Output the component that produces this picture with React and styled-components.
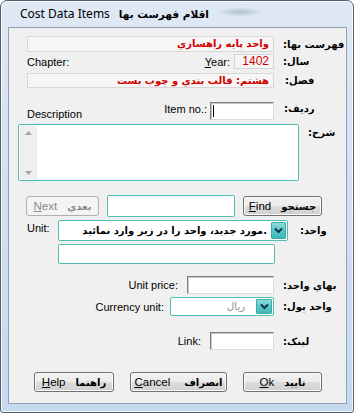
import React from "react";
import styled, { createGlobalStyle, css } from "styled-components";

const Global = createGlobalStyle`
  html, body { margin: 0; padding: 0; background: #ffffff; }
  body { font-family: "Liberation Sans", "DejaVu Sans", sans-serif; font-size: 11px; color: #000; }
  * { box-sizing: border-box; }
`;

const Window = styled.div`
  width: 354px;
  height: 413px;
  border: 1px solid #55606c;
  border-radius: 7px 7px 3px 3px;
  background: linear-gradient(180deg, #dfe9f5 0%, #d3e1f1 40%, #c6d9ee 100%);
  box-shadow: inset 0 0 0 1px rgba(255, 255, 255, 0.75);
  padding: 0 6px 8px 7px;
  display: flex;
  flex-direction: column;
`;

const TitleBar = styled.div`
  height: 26px;
  display: flex;
  align-items: center;
  gap: 9px;
  padding: 0 0 1px 12px;
  background: radial-gradient(ellipse 22px 5px at 232px 11px, rgba(90, 110, 130, 0.35), rgba(90, 110, 130, 0) 100%);
`;

const TitleText = styled.span`
  font-family: "Noto Sans", "DejaVu Sans", sans-serif;
  font-size: 12px;
  color: #000;
  ${(p) => p.$fa && css`font-family: "DejaVu Sans", sans-serif; font-weight: bold; font-size: 10.5px; direction: rtl;`}
`;

const Client = styled.div`
  flex: 1;
  background: #f0f0f0;
  border: 1px solid #8fa1b6;
  padding: 8px 0 0 18px;
  display: flex;
  flex-direction: column;
`;

const Row = styled.div`
  display: flex;
  align-items: ${(p) => p.$align || "center"};
  height: ${(p) => p.$h}px;
  margin-top: ${(p) => p.$mt || 0}px;
  margin-left: ${(p) => p.$ml || 0}px;
  gap: ${(p) => p.$gap || 0}px;
`;

const Field = styled.div`
  width: ${(p) => p.$w || 247}px;
  height: 100%;
  display: flex;
  align-items: ${(p) => p.$align || "center"};
  justify-content: ${(p) => p.$justify || "flex-end"};
  gap: ${(p) => p.$gap || 0}px;
`;

const FaLabel = styled.span`
  margin-left: ${(p) => (p.$ml === undefined ? 9 : p.$ml)}px;
  margin-top: ${(p) => p.$mt || 0}px;
  direction: rtl;
  font-family: "DejaVu Sans", sans-serif;
  font-weight: bold;
  font-size: 10px;
  white-space: nowrap;
  align-self: ${(p) => p.$self || "auto"};
  line-height: ${(p) => p.$lh || "normal"};
`;

const EnLabel = styled.span`
  font-family: "Liberation Sans", sans-serif;
  font-size: 11px;
  white-space: nowrap;
  margin-right: ${(p) => p.$mr || 0}px;
  margin-top: ${(p) => p.$mt || 0}px;
  align-self: ${(p) => p.$self || "auto"};
  line-height: ${(p) => p.$lh || "normal"};
`;

const U = styled.span`
  text-decoration: underline;
`;

const ReadBox = styled.div`
  width: ${(p) => p.$w}px;
  height: 100%;
  border: 1px solid #d6d6d6;
  background: #f6f6f6;
  color: #d40000;
  display: flex;
  align-items: center;
  justify-content: flex-end;
  padding: 0 4px 1px;
  overflow: hidden;
  white-space: nowrap;
  ${(p) =>
    p.$fa
      ? css`
          direction: rtl;
          justify-content: flex-start;
          font-family: "DejaVu Sans", sans-serif;
          font-weight: bold;
          font-size: 10px;
        `
      : css`
          font-family: "Liberation Sans", sans-serif;
          font-size: 12px;
        `}
`;

const SunkenInput = styled.div`
  width: ${(p) => p.$w}px;
  height: ${(p) => p.$h || 18}px;
  background: #fff;
  border: 1px solid;
  border-color: #7e7e7e #dcdcdc #dcdcdc #7e7e7e;
  box-shadow: inset 1px 1px 0 #c8c8c8;
  display: flex;
  align-items: center;
  padding-left: 2px;
`;

const Caret = styled.span`
  width: 1px;
  height: 12px;
  background: #000;
`;

const TealBox = styled.div`
  width: ${(p) => p.$w}px;
  height: ${(p) => p.$h}px;
  background: #fff;
  border: 1px solid #52bdb1;
  border-radius: 2px;
  display: flex;
  align-items: stretch;
`;

const Scroll = styled.div`
  width: 17px;
  margin: 1px 0 1px 1px;
  background: #efefef;
  display: flex;
  flex-direction: column;
  justify-content: space-between;
  align-items: center;
  padding: 5px 0 4px;
`;

const ComboText = styled.div`
  flex: 1;
  display: flex;
  align-items: center;
  justify-content: flex-end;
  padding-right: ${(p) => p.$pr || 3}px;
  white-space: nowrap;
  overflow: hidden;
  font-family: "DejaVu Sans", sans-serif;
  font-size: 10px;
  color: ${(p) => (p.$muted ? "#8a8a8a" : "#000")};
  font-weight: ${(p) => (p.$muted ? "normal" : "bold")};
`;

const DropBtn = styled.div`
  width: ${(p) => p.$w || 15}px;
  margin: 1px;
  border-radius: 1px;
  background: linear-gradient(180deg, #8fdcdc 0%, #5cc9c9 45%, #3fb7b9 100%);
  border: 1px solid #3aa9ab;
  display: flex;
  align-items: center;
  justify-content: center;
`;

const Button = styled.div`
  width: ${(p) => p.$w}px;
  height: 20px;
  border: 1px solid #707070;
  border-radius: 3px;
  background: linear-gradient(180deg, #f2f2f2 0%, #ebebeb 48%, #dddddd 52%, #cfcfcf 100%);
  box-shadow: inset 0 0 0 1px #fbfbfb;
  display: flex;
  align-items: center;
  justify-content: center;
  gap: ${(p) => p.$gap || 10}px;
  font-family: "Liberation Sans", sans-serif;
  font-size: 11.5px;
  color: #000;
  ${(p) =>
    p.$disabled &&
    css`
      border-color: #adb2b5;
      background: #f4f4f4;
      color: #8a8a8a;
      box-shadow: none;
    `}
`;

const BtnFa = styled.span`
  font-family: "DejaVu Sans", sans-serif;
  font-weight: bold;
  font-size: 10px;
  direction: rtl;
`;

const Chevron = () => (
  <svg width="9" height="7" viewBox="0 0 9 7">
    <path d="M1 1.5 L4.5 5 L8 1.5" fill="none" stroke="#13304f" strokeWidth="2" />
  </svg>
);

const Arrow = ({ down }) => (
  <svg width="7" height="4" viewBox="0 0 7 4">
    <path d={down ? "M0 0 L7 0 L3.5 4 Z" : "M0 4 L7 4 L3.5 0 Z"} fill="#a8a8a8" />
  </svg>
);

export default function App() {
  return (
    <>
      <Global />
      <Window>
        <TitleBar>
          <TitleText>Cost Data Items</TitleText>
          <TitleText $fa>اقلام فهرست بها</TitleText>
        </TitleBar>
        <Client>
          <Row $h={16}>
            <Field>
              <ReadBox $w={247} $fa>واحد پايه راهسازي</ReadBox>
            </Field>
            <FaLabel>فهرست بها:</FaLabel>
          </Row>

          <Row $h={15} $mt={2}>
            <Field $justify="space-between">
              <EnLabel>Chapter:</EnLabel>
              <Field $w={100} $gap={4}>
                <EnLabel>
                  <U>Y</U>ear:
                </EnLabel>
                <ReadBox $w={40}>1402</ReadBox>
              </Field>
            </Field>
            <FaLabel>سال:</FaLabel>
          </Row>

          <Row $h={15} $mt={4}>
            <Field>
              <ReadBox $w={247} $fa>هشتم: قالب بندي و چوب بست</ReadBox>
            </Field>
            <FaLabel $ml={11}>فصل:</FaLabel>
          </Row>

          <Row $h={21} $mt={12} $align="flex-start">
            <Field $justify="space-between" $align="flex-start">
              <EnLabel $self="flex-end" $lh="13px">Description</EnLabel>
              <Field $w={140} $gap={3}>
                <EnLabel $self="flex-start" $lh="18px">Item no.:</EnLabel>
                <SunkenInput $w={64}>
                  <Caret />
                </SunkenInput>
              </Field>
            </Field>
            <FaLabel $ml={10} $lh="18px">ردیف:</FaLabel>
          </Row>

          <Row $h={57} $mt={3} $ml={-9} $align="flex-start">
            <TealBox $w={281} $h={57}>
              <Scroll>
                <Arrow />
                <Arrow down />
              </Scroll>
            </TealBox>
            <FaLabel $mt={3}>شرح:</FaLabel>
          </Row>

          <Row $h={22} $mt={14} $ml={-1} $gap={8}>
            <Button $w={73} $disabled>
              <span>
                <U>N</U>ext
              </span>
              <BtnFa>بعدي</BtnFa>
            </Button>
            <TealBox $w={128} $h={22} />
            <Button $w={79}>
              <span>
                <U>F</U>ind
              </span>
              <BtnFa>جستجو</BtnFa>
            </Button>
          </Row>

          <Row $h={21} $mt={3} $align="flex-start">
            <Field $w={261} $justify="space-between" $align="flex-start">
              <EnLabel $mt={2}>Unit:</EnLabel>
              <TealBox $w={230} $h={21}>
                <ComboText>مورد جدید، واحد را در زیر وارد نمائید.</ComboText>
                <DropBtn>
                  <Chevron />
                </DropBtn>
              </TealBox>
            </Field>
            <FaLabel $ml={12} $lh="21px">واحد:</FaLabel>
          </Row>

          <Row $h={20} $mt={3} $ml={31}>
            <TealBox $w={217} $h={20} />
          </Row>

          <Row $h={18} $mt={12}>
            <Field $gap={9}>
              <EnLabel>Unit price:</EnLabel>
              <SunkenInput $w={87} />
            </Field>
            <FaLabel>بهاي واحد:</FaLabel>
          </Row>

          <Row $h={19} $mt={3}>
            <Field $gap={6}>
              <EnLabel>Currency unit:</EnLabel>
              <TealBox $w={104} $h={19}>
                <ComboText $muted $pr={10}>ريال</ComboText>
                <DropBtn $w={16}>
                  <Chevron />
                </DropBtn>
              </TealBox>
            </Field>
            <FaLabel>واحد پول:</FaLabel>
          </Row>

          <Row $h={18} $mt={16}>
            <Field $gap={9}>
              <EnLabel>Link:</EnLabel>
              <SunkenInput $w={64} />
            </Field>
            <FaLabel>لینک:</FaLabel>
          </Row>

          <Row $h={20} $mt={22} $ml={7} $gap={16}>
            <Button $w={80}>
              <span>
                <U>H</U>elp
              </span>
              <BtnFa>راهنما</BtnFa>
            </Button>
            <Button $w={97} $gap={14}>
              <span>
                <U>C</U>ancel
              </span>
              <BtnFa>انصراف</BtnFa>
            </Button>
            <Button $w={79}>
              <span>
                <U>O</U>k
              </span>
              <BtnFa>تاييد</BtnFa>
            </Button>
          </Row>
        </Client>
      </Window>
    </>
  );
}
